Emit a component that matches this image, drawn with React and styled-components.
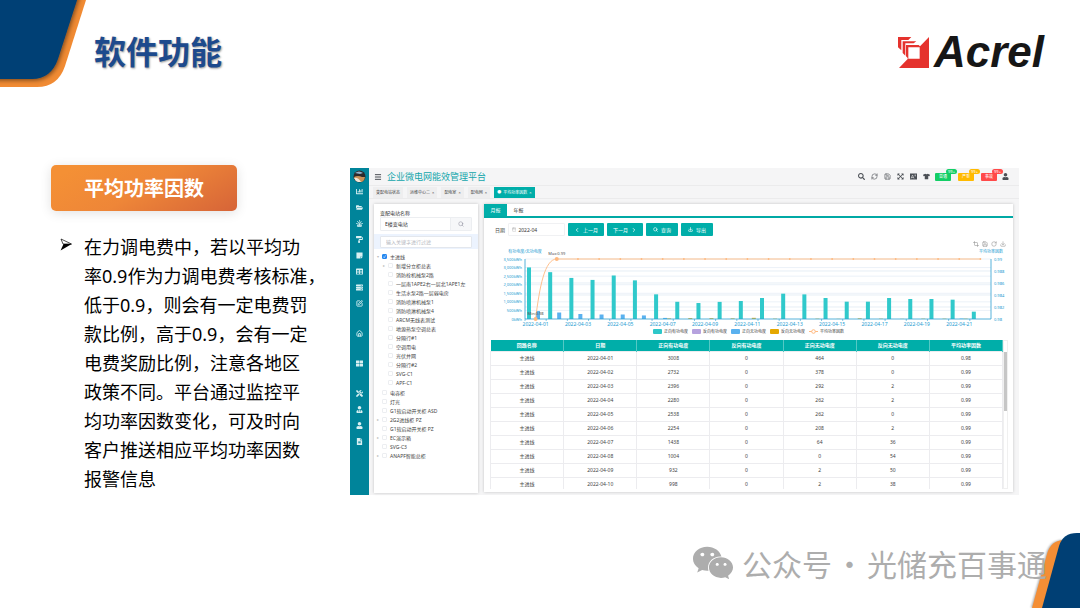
import { useState } from "react";
import styled, { createGlobalStyle } from "styled-components";
import {
  FaChartBar,
  FaExpandArrowsAlt,
  FaFileAlt,
  FaFolderOpen,
  FaPaintRoller,
  FaSearch,
  FaServer,
  FaStickyNote,
  FaTable,
  FaThLarge,
  FaTools,
  FaTshirt,
  FaUser,
  FaUserTie,
  FaWeixin,
} from "react-icons/fa";
import {
  Calendar,
  ChevronLeft,
  ChevronRight,
  Crop,
  Download,
  Home,
  Menu,
  RefreshCw,
  RotateCw,
  Save,
  Search,
  Siren,
  SquarePen,
} from "lucide-react";

const GlobalStyle = createGlobalStyle`
  * { box-sizing: border-box; }
  body {
    margin: 0;
    background: #fff;
    font-family: "Noto Sans", "Noto Sans CJK SC", sans-serif;
  }
  button, input { font: inherit; margin: 0; }
`;

const Slide = styled.div`
  position: relative;
  display: flex;
  flex-direction: column;
  min-height: 100vh;
  overflow: hidden;
`;

const Corner = styled.svg`
  position: absolute;
  ${(p) => (p.$end ? "right: 0; bottom: 0;" : "left: 0; top: 0;")}
`;

const SlideHeader = styled.header`
  display: flex;
  justify-content: space-between;
  align-items: flex-start;
  height: 165px;
  padding: 26px 36px 0 94px;
`;

const Title = styled.h1`
  margin: 0;
  color: #1d4a8d;
  font-family: "Noto Sans CJK SC", sans-serif;
  font-size: 32px;
  line-height: 48px;
  font-weight: 700;
  text-shadow: 1px 1px 2px rgba(0, 0, 0, 0.4);
`;

const Logo = styled.div`
  display: flex;
  align-items: center;
  gap: 5px;
  height: 52px;
  color: #161616;
  font: italic 700 44px/52px "Liberation Sans", sans-serif;
`;

const Content = styled.main`
  display: flex;
  align-items: flex-start;
  flex: 1;
  padding: 0 61px 0 51px;
`;

const Summary = styled.section`
  flex: 0 0 299px;
`;

const Heading = styled.h2`
  display: flex;
  align-items: center;
  justify-content: center;
  width: 186px;
  height: 46px;
  margin: 0 0 22px;
  border-radius: 5px;
  background: linear-gradient(150deg, #f49035 10%, #ee8638 50%, #d66438 100%);
  box-shadow: 0 2px 12px rgba(0, 0, 0, 0.12);
  color: #fff;
  font: 700 20px/30px "Noto Sans CJK SC", sans-serif;
`;

const Bullet = styled.div`
  display: flex;
  gap: 12px;
  padding-left: 9px;
  font-size: 18px;
  line-height: 29px;
  color: #000;

  svg {
    flex: none;
    margin-top: 5px;
  }
  p {
    margin: 0;
    white-space: pre;
  }
`;

const Dashboard = styled.section`
  display: flex;
  flex: 1;
  min-width: 0;
  margin-top: 3px;
  background: #f5f5f6;
  color: #444;
  font-size: 5px;
  line-height: 8px;
`;

const Sidebar = styled.nav`
  display: flex;
  flex-direction: column;
  align-items: center;
  flex: 0 0 19px;
  padding-top: 2px;
  background: #00849a;
`;

const Avatar = styled.svg`
  flex: none;
`;

const NavItem = styled.a`
  display: flex;
  align-items: center;
  justify-content: center;
  width: 19px;
  height: 16px;
  margin-top: ${(p) => (p.$apart ? "14px" : "0")};
  color: #d9f0f2;
`;

const Workspace = styled.div`
  flex: 1;
  min-width: 0;
`;

const TopBar = styled.header`
  display: flex;
  align-items: center;
  height: 18px;
  padding: 0 10px 0 5px;
  gap: 5px;
  border-bottom: 1px solid #ebebec;
  color: #4b4f55;
`;

const Brand = styled.h3`
  margin: 0;
  flex: 1;
  color: #12a5ab;
  font-size: 9px;
  line-height: 14px;
  font-weight: 400;
`;

const Tools = styled.div`
  display: flex;
  align-items: center;
  gap: 6px;
`;

const IconButton = styled.button`
  display: flex;
  padding: 0;
  border: 0;
  background: none;
  color: inherit;
`;

const Alarm = styled.button`
  position: relative;
  width: 16px;
  height: 8px;
  margin-right: ${(p) => (p.$last ? "0" : "2px")};
  padding: 0;
  border: 0;
  border-radius: 1px;
  background: ${(p) => p.$color};
  color: #fff;
  font-size: 4px;
  line-height: 8px;

  span {
    position: absolute;
    top: -4px;
    right: -6px;
    width: 11px;
    height: 5px;
    border-radius: 3px;
    background: ${(p) => p.$color};
    line-height: 5px;
  }
`;

const PageTabs = styled.div`
  display: flex;
  align-items: center;
  gap: 4px;
  height: 13px;
  padding-left: 4px;
  border-bottom: 1px solid #ebebec;
`;

const PageTab = styled.button`
  height: 11px;
  padding: 0 3px;
  border: 0;
  background: ${(p) => (p.$active ? "#00aea9" : "#eeeeef")};
  color: ${(p) => (p.$active ? "#fff" : "#444")};
  font-size: 4px;
  line-height: 11px;
  white-space: pre;
`;

const Panels = styled.div`
  display: flex;
  align-items: flex-start;
  gap: 6px;
  padding: 5px 6px 2px 5px;
`;

const Card = styled.section`
  background: #fff;
  box-shadow: 0 0 3px rgba(0, 0, 0, 0.2);
`;

const TreeCard = styled(Card)`
  flex: 0 0 104px;
  min-width: 0;
  min-height: 289px;
`;

const StationField = styled.div`
  padding: 5px 6px 3px;

  label {
    display: block;
    color: #333;
  }
`;

const SearchBox = styled.div`
  display: flex;
  height: 14px;
  border: 1px solid #eceef1;
  border-radius: 1px;

  input {
    flex: 1;
    width: 0;
    min-width: 0;
    padding: 0 4px;
    border: 0;
    color: #333;
  }
  button {
    display: flex;
    align-items: center;
    justify-content: center;
    width: 21px;
    padding: 0;
    border: 0;
    border-left: 1px solid #eceef1;
    background: #f6f7f9;
    color: #889;
  }
`;

const FilterStrip = styled.div`
  padding: 2px 6px 1px;
  background: #ecf3fe;

  input {
    display: block;
    width: 100%;
    height: 12px;
    padding: 0 5px;
    border: 1px solid #e3e7ed;
    border-radius: 1px;
  }
  input::placeholder {
    color: #b3b6bd;
  }
`;

const Tree = styled.ul`
  margin: ${(p) => (p.$nested ? "0 0 1px" : "3px 0 0")};
  padding: 0 0 0 ${(p) => (p.$nested ? "6px" : "3px")};
  list-style: none;
`;

const Node = styled.label`
  display: flex;
  align-items: center;
  height: 9px;
  color: #444;
  white-space: nowrap;
`;

const Caret = styled.span`
  width: 5px;
  color: #bbb;
  font-size: 4px;
`;

const Tick = styled.input`
  appearance: none;
  display: flex;
  align-items: center;
  justify-content: center;
  width: 5px;
  height: 5px;
  margin-right: 3px;
  border: 1px solid #eceef1;
  border-radius: 1px;

  &:checked {
    border-color: #2487f0;
    background: #2487f0;
  }
  &:checked::after {
    content: "✓";
    color: #fff;
    font-size: 4px;
    line-height: 4px;
  }
`;

const ReportCard = styled(Card)`
  flex: 1;
  min-width: 0;
  padding-bottom: 3px;
`;

const ReportTabs = styled.div`
  display: flex;
  height: 14px;
  border-bottom: 2px solid #00a9a5;
`;

const ReportTab = styled.button`
  width: 23px;
  padding: 0;
  border: 0;
  background: ${(p) => (p.$active ? "#00aea9" : "#fff")};
  color: ${(p) => (p.$active ? "#fff" : "#333")};
`;

const Query = styled.form`
  display: flex;
  align-items: center;
  gap: 3px;
  padding: 5px 11px 4px;
`;

const DateBox = styled.span`
  display: flex;
  align-items: center;
  gap: 2px;
  width: 57px;
  height: 13px;
  padding: 0 3px;
  border: 1px solid #f0f1f3;
  border-radius: 1px;
  color: #aaa;

  input {
    width: 100%;
    padding: 0;
    border: 0;
    color: #333;
  }
`;

const Action = styled.button`
  display: flex;
  align-items: center;
  justify-content: center;
  gap: 3px;
  width: ${(p) => (p.$wide ? "36px" : "32px")};
  height: 13px;
  padding: 0;
  border: 0;
  border-radius: 1px;
  background: #00aea9;
  color: #fff;
`;

const ChartTools = styled.div`
  display: flex;
  align-items: flex-end;
  justify-content: flex-end;
  gap: 3px;
  height: 7px;
  padding-right: 7px;
  color: #888;
`;

const ChartSvg = styled.svg`
  display: block;
  width: 100%;
  font-size: 4px;

  .axis {
    fill: #249cd2;
  }
  .date {
    font-size: 5px;
  }
`;

const Legend = styled.div`
  display: flex;
  justify-content: center;
  gap: 4px;
  height: 7px;
  margin-bottom: 5px;
  font-size: 4px;
  line-height: 7px;

  span {
    display: flex;
    align-items: center;
    gap: 2px;
  }
`;

const Swatch = styled.i`
  width: 9px;
  height: 5px;
  border-radius: 1px;
  background: ${(p) => p.$color};
`;

const TableBox = styled.div`
  display: flex;
  height: 149px;
  margin: 0 5px 0 6px;
  overflow: hidden;
`;

const Table = styled.table`
  flex: 1;
  width: 100%;
  height: 151px;
  table-layout: fixed;
  border-collapse: collapse;
  text-align: center;
  color: #444;

  th {
    height: 11px;
    padding: 0;
    border-right: 1px solid #54c9c5;
    background: #00aea9;
    color: #fff;
    font-weight: 700;
  }
  td {
    height: 14px;
    padding: 0;
    border: 1px solid #ececef;
  }
`;

const ScrollTrack = styled.div`
  width: 5px;
  padding-top: 11px;
  border: 1px solid #f0f0f0;

  div {
    height: 59px;
    background: #c6c6c6;
  }
`;

const Watermark = styled.footer`
  position: absolute;
  right: 33px;
  bottom: 23px;
  display: flex;
  align-items: center;
  color: #adadad;
  font: 400 30px/44px "Noto Sans CJK SC", sans-serif;

  svg {
    margin-right: 8px;
  }
`;

const Dot = styled.span`
  width: 35px;
  text-align: center;
`;

const lines = [
  "在力调电费中，若以平均功",
  "率0.9作为力调电费考核标准，",
  "低于0.9，则会有一定电费罚",
  "款比例，高于0.9，会有一定",
  "电费奖励比例，注意各地区",
  "政策不同。平台通过监控平",
  "均功率因数变化，可及时向",
  "客户推送相应平均功率因数",
  "报警信息",
];

const navItems = [
  { name: "统计", Icon: FaChartBar },
  { name: "文件", Icon: FaFolderOpen },
  { name: "报警", Icon: Siren },
  { name: "运维", Icon: FaPaintRoller },
  { name: "查询", Icon: FaStickyNote },
  { name: "日历", Icon: FaTable },
  { name: "设备", Icon: FaServer },
  { name: "编辑", Icon: SquarePen },
  { name: "首页", Icon: Home, apart: true },
  { name: "监控", Icon: FaThLarge, apart: true },
  { name: "工具", Icon: FaTools, apart: true },
  { name: "单位", Icon: FaUserTie },
  { name: "用户", Icon: FaUser },
  { name: "报表", Icon: FaFileAlt },
];

function Translate({ size }) {
  return (
    <svg width={size} height={size} viewBox="0 0 14 14" fill="none">
      <rect y="1" width="14" height="12" fill="currentColor" />
      <path d="M2 11L5 4L8 11M3 9H7M9 4H12M10.500 4V7" stroke="#fff" />
    </svg>
  );
}

const topIcons = [
  { name: "搜索", Icon: FaSearch },
  { name: "刷新", Icon: RefreshCw },
  { name: "保存", Icon: Save },
  { name: "全屏", Icon: FaExpandArrowsAlt },
  { name: "语言", Icon: Translate },
  { name: "主题", Icon: FaTshirt },
];

const circuits = [
  "新增分立柜总表",
  "消防栓机械泵2路",
  "一层南1APE2右一层北1APE1左",
  "生活水泵2路一层弱电房",
  "消防喷淋机械泵1",
  "消防喷淋机械泵4",
  "ARCM无线表测试",
  "地源热泵空调总表",
  "分隔行#1",
  "空调用电",
  "光伏并网",
  "分隔行#2",
  "SVG-C1",
  "APF-C1",
];

const cabinets = [
  { name: "电容柜" },
  { name: "灯光" },
  { name: "G1软启动开关柜 ASD" },
  { name: "2G2进线柜 PZ", open: true },
  { name: "G1软启动开关柜 PZ" },
  { name: "EC演示箱", open: true },
  { name: "SVG-C3" },
  { name: "ANAPF智能总柜", open: true },
];

const active = [
  3008, 2732, 2396, 2280, 2538, 2254, 1438, 1004, 932, 998, 1050, 1225, 1478,
  1436, 1225, 1011, 1011, 1225, 1167, 1167, 1128, 428,
];
const reactive = [464, 378, 292, 262, 262, 208, 64, 0, 2, 2, 0, 0, 0, 0, 0, 0, 0, 0, 0, 0, 20, 0];
const reverse = [0, 0, 2, 2, 0, 2, 36, 54, 50, 38, 70, 20, 0, 20, 10, 40, 20, 10, 20, 20, 20, 0];

const columns = [
  "回路名称",
  "日期",
  "正向有功电度",
  "反向有功电度",
  "正向无功电度",
  "反向无功电度",
  "平均功率因数",
];

const dateOf = (i) => `2022-04-${String(i + 1).padStart(2, "0")}`;

const PLOT = { left: 41, right: 507, top: 12, bottom: 72 };
const STEP = (PLOT.right - PLOT.left) / active.length;

function Bars({ values, offset, color }) {
  return values.map((v, i) => {
    const h = (v / 3500) * 60;
    return (
      <rect
        key={i}
        x={PLOT.left + i * STEP + offset}
        y={PLOT.bottom - h}
        width={4}
        height={h}
        fill={color}
      />
    );
  });
}

function Chart() {
  const { left, right, top, bottom } = PLOT;
  const cx = (i) => left + (i + 0.5) * STEP;

  return (
    <ChartSvg viewBox="0 0 529 81" role="img" aria-label="平均功率因数">
      {[0, 1, 2, 3, 4, 5, 6].map((i) => (
        <path
          key={i}
          d={`M${left} ${top + (i * 60) / 7}H${right}`}
          stroke="#e3ebf4"
          strokeWidth="0.7"
        />
      ))}
      {[1, 2, 3, 4].map((i) => (
        <path
          key={i}
          d={`M${left} ${top + i * 12}H${right}`}
          stroke="#dbe6f1"
          strokeWidth="0.7"
        />
      ))}
      {["3,500", "3,000", "2,500", "2,000", "1,500", "1,000", "500", "0"].map(
        (t, i) => (
          <text
            key={t}
            className="axis"
            x={left - 3}
            y={top + (i * 60) / 7 + 1.5}
            textAnchor="end"
          >
            {t}kWh
          </text>
        )
      )}
      {["0.99", "0.988", "0.986", "0.984", "0.982", "0.98"].map((t, i) => (
        <text key={t} className="axis" x={right + 3} y={top + i * 12 + 1.5}>
          {t}
        </text>
      ))}
      <Bars values={active} offset={2} color="#30c9cb" />
      <Bars values={reactive} offset={11} color="#5ab1ef" />
      <Bars values={reverse} offset={15} color="#e5b22a" />
      <path
        d={`M${left} ${top}V${bottom}H${right}V${top}`}
        fill="none"
        stroke="#2b9fd0"
        strokeWidth="0.8"
      />
      {active.map((_, i) => (
        <g key={i}>
          <path
            d={`M${left + i * STEP} ${bottom}v2`}
            stroke="#2b9fd0"
            strokeWidth="0.6"
          />
          {i > 0 && <circle cx={cx(i)} cy={top} r="0.9" fill="#ffb980" />}
          {i % 2 === 0 && (
            <text
              className="axis date"
              x={cx(i)}
              y={bottom + 7}
              textAnchor="middle"
            >
              {dateOf(i)}
            </text>
          )}
        </g>
      ))}
      <path
        d={`M${cx(0)} ${bottom}C${cx(0) + 4} 40 ${cx(0) + 9} ${top} ${cx(1)} ${top}H${cx(21)}`}
        fill="none"
        stroke="#ffb980"
        strokeWidth="0.9"
      />
      <circle cx={cx(0)} cy={bottom} r="2" fill="#ffb980" />
      <circle cx={cx(1)} cy={top} r="2" fill="#ffb980" />
      <text x={cx(0)} y={bottom - 4} textAnchor="middle" fill="#555">
        Min:0.98
      </text>
      <text x={cx(1)} y={top - 4} textAnchor="middle" fill="#555">
        Max:0.99
      </text>
      <text className="axis" x={left} y={top - 6} textAnchor="middle">
        有功电度/无功电度
      </text>
      <text className="axis" x={right} y={top - 6} textAnchor="middle">
        平均功率因数
      </text>
    </ChartSvg>
  );
}

function TreeNode({ id, name, caret, checked = false }) {
  const [on, setOn] = useState(checked);
  return (
    <Node htmlFor={id}>
      <Caret>{caret}</Caret>
      <Tick
        id={id}
        type="checkbox"
        checked={on}
        onChange={() => setOn((prev) => !prev)}
      />
      {name}
    </Node>
  );
}

function StationTree() {
  const [station, setStation] = useState("E楼变电站");
  return (
    <TreeCard>
      <StationField>
        <label htmlFor="station">变配电站名称</label>
        <SearchBox>
          <input
            id="station"
            value={station}
            onChange={(e) => setStation(e.target.value)}
          />
          <button aria-label="搜索">
            <Search size={6} />
          </button>
        </SearchBox>
      </StationField>
      <FilterStrip>
        <input aria-label="过滤" placeholder="输入关键字进行过滤" />
      </FilterStrip>
      <Tree>
        <li>
          <TreeNode id="root" name="主进线" caret="▾" checked />
          <Tree $nested>
            {circuits.map((name, i) => (
              <li key={name}>
                <TreeNode id={`c${i}`} name={name} caret={i === 0 ? "▸" : ""} />
              </li>
            ))}
          </Tree>
        </li>
        {cabinets.map(({ name, open }, i) => (
          <li key={name}>
            <TreeNode id={`k${i}`} name={name} caret={open ? "▸" : ""} />
          </li>
        ))}
      </Tree>
    </TreeCard>
  );
}

function Report() {
  const [month, setMonth] = useState("2022-04");
  return (
    <ReportCard>
      <ReportTabs>
        <ReportTab $active>月报</ReportTab>
        <ReportTab>年报</ReportTab>
      </ReportTabs>
      <Query onSubmit={(e) => e.preventDefault()}>
        <label htmlFor="month">日期</label>
        <DateBox>
          <Calendar size={5} />
          <input
            id="month"
            value={month}
            onChange={(e) => setMonth(e.target.value)}
          />
        </DateBox>
        <Action $wide>
          <ChevronLeft size={6} strokeWidth={3} />
          上一月
        </Action>
        <Action $wide>
          下一月
          <ChevronRight size={6} strokeWidth={3} />
        </Action>
        <Action>
          <Search size={5} strokeWidth={3} />
          查询
        </Action>
        <Action>
          <Download size={5} strokeWidth={3} />
          导出
        </Action>
      </Query>
      <ChartTools>
        {[Crop, Save, RotateCw, Download].map((Icon, i) => (
          <Icon key={i} size={6} />
        ))}
      </ChartTools>
      <Chart />
      <Legend>
        <span>
          <Swatch $color="#2ec7c9" />
          正向有功电度
        </span>
        <span>
          <Swatch $color="#b6a2de" />
          反向有功电度
        </span>
        <span>
          <Swatch $color="#5ab1ef" />
          正向无功电度
        </span>
        <span>
          <Swatch $color="#e5a800" />
          反向无功电度
        </span>
        <span>
          <svg width="9" height="5" viewBox="0 0 9 5" stroke="#ffb980">
            <path d="M0 2.5H9" />
            <circle cx="4.5" cy="2.5" r="1.8" fill="#fff" />
          </svg>
          平均功率因数
        </span>
      </Legend>
      <TableBox>
        <Table>
          <thead>
            <tr>
              {columns.map((c) => (
                <th key={c}>{c}</th>
              ))}
            </tr>
          </thead>
          <tbody>
            {active.slice(0, 10).map((value, i) => (
              <tr key={i}>
                <td>主进线</td>
                <td>{dateOf(i)}</td>
                <td>{value}</td>
                <td>0</td>
                <td>{reactive[i]}</td>
                <td>{reverse[i]}</td>
                <td>{i === 0 ? "0.98" : "0.99"}</td>
              </tr>
            ))}
          </tbody>
        </Table>
        <ScrollTrack>
          <div />
        </ScrollTrack>
      </TableBox>
    </ReportCard>
  );
}

export default function App() {
  return (
    <>
      <GlobalStyle />
      <Slide>
        <Corner width="90" height="92" viewBox="0 0 90 92">
          <defs>
            <filter id="soft" x="-20%" y="-20%" width="150%" height="150%">
              <feDropShadow dx="1" dy="1" stdDeviation="2.5" floodOpacity="0.55" />
            </filter>
            <clipPath id="band">
              <path d="M0 0H86L65 66Q58 87 37 87H0Z" />
            </clipPath>
          </defs>
          <path d="M0 0H86L65 66Q58 87 37 87H0Z" fill="#f18b33" />
          <g clipPath="url(#band)">
            <path
              d="M-9 -9H80L58 59Q51 79 32 79H-9Z"
              fill="#003f74"
              filter="url(#soft)"
            />
          </g>
        </Corner>
        <Corner $end width="60" height="80" viewBox="0 0 60 80">
          <path
            d="M12 80L27 26Q31 12 44 12H60V80Z"
            fill="#f48e35"
            filter="drop-shadow(-1px 0 1px rgba(0,0,0,0.35))"
          />
          <path d="M22 80L39 18Q43 5 57 5H60V80Z" fill="#003f74" />
        </Corner>

        <SlideHeader>
          <Title>软件功能</Title>
          <Logo>
            <svg width="31" height="31" viewBox="0 0 93 93" fill="#e5322d">
              <path d="M0 0H40L31 9H10V40L0 31Z" />
              <path d="M14 13H55L47 19H22V56L14 48Z" />
              <path
                d="M93 0V93H3L29 66V63L24 58V24H62L66 28ZM31 31V65H65V31Z"
                fillRule="evenodd"
              />
            </svg>
            Acrel
          </Logo>
        </SlideHeader>

        <Content>
          <Summary>
            <Heading>平均功率因数</Heading>
            <Bullet>
              <svg width="12" height="13" viewBox="0 0 12 13">
                <path
                  d="M1 1L11.500 6L3 6Z"
                  fill="#fff"
                  stroke="#000"
                  strokeWidth="0.7"
                />
                <path d="M3.500 6H11.700L.600 12.500Z" />
              </svg>
              <p>{lines.join("\n")}</p>
            </Bullet>
          </Summary>

          <Dashboard>
            <Sidebar>
              <Avatar width="13" height="13" viewBox="0 0 13 13">
                <circle cx="6.500" cy="6.500" r="6" fill="#2d2a2b" />
                <path d="M1 7Q5 5 9 7L12 7Q12 10 9 12H6Q2 11 1 7Z" fill="#c99158" />
                <path d="M2 3Q6 0 10 3L7 4Z" fill="#8db3cf" />
                <path d="M1 8Q5 7 8 12H5Q2 11 1 8Z" fill="#f1e6d8" />
              </Avatar>
              {navItems.map(({ name, Icon, apart }) => (
                <NavItem key={name} href="#" aria-label={name} $apart={apart}>
                  <Icon size={7} strokeWidth={Icon.displayName ? 3 : 0} />
                </NavItem>
              ))}
            </Sidebar>
            <Workspace>
              <TopBar>
                <IconButton aria-label="菜单">
                  <Menu size={8} strokeWidth={3} />
                </IconButton>
                <Brand>企业微电网能效管理平台</Brand>
                <Tools>
                  {topIcons.map(({ name, Icon }) => (
                    <IconButton key={name} aria-label={name}>
                      <Icon size={7} />
                    </IconButton>
                  ))}
                </Tools>
                <Alarm $color="#13ce66">
                  普通<span>99+</span>
                </Alarm>
                <Alarm $color="#ffba00">
                  严重<span>99+</span>
                </Alarm>
                <Alarm $color="#ff4949" $last>
                  事故<span>99+</span>
                </Alarm>
                <IconButton aria-label="用户">
                  <FaUser size={7} />
                </IconButton>
              </TopBar>
              <PageTabs>
                <PageTab>变配电站状态</PageTab>
                <PageTab>{"运维中心二  ×"}</PageTab>
                <PageTab>{"配电室  ×"}</PageTab>
                <PageTab>{"配电网  ×"}</PageTab>
                <PageTab $active>{"●  平均功率因数  ×"}</PageTab>
              </PageTabs>
              <Panels>
                <StationTree />
                <Report />
              </Panels>
            </Workspace>
          </Dashboard>
        </Content>

        <Watermark>
          <FaWeixin size={42} />
          公众号<Dot>·</Dot>光储充百事通
        </Watermark>
      </Slide>
    </>
  );
}
